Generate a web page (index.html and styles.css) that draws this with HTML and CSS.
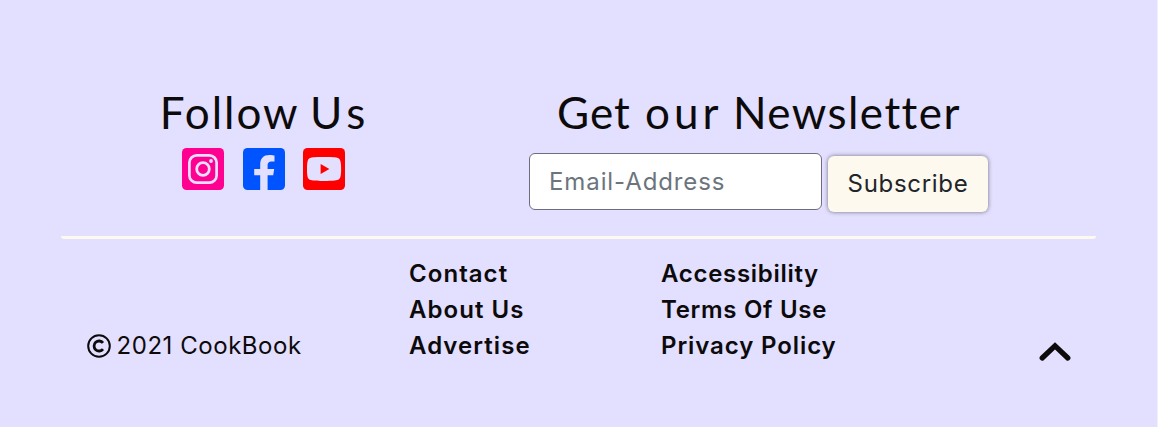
FILE: index.html
```
<!DOCTYPE html>
<html lang="en">
<head>
<meta charset="utf-8">
<title>CookBook</title>
<link rel="stylesheet" href="styles.css">
</head>
<body>
<footer class="footer">
  <div class="top">
    <section class="follow">
      <h2 class="heading heading-follow"><span class="follow-word">Follow</span> <span class="us-word">Us</span></h2>
      <div class="socials">
        <a class="social instagram" aria-label="Instagram"><svg viewBox="0 0 42 42"><rect width="42" height="42" rx="4.5" fill="currentColor"/><g fill="none" stroke="#e2dfff"><rect x="7.4" y="7.4" width="27.2" height="27.2" rx="7.2" stroke-width="2.7"/><circle cx="21" cy="21" r="6.3" stroke-width="2.8"/></g><circle cx="29" cy="13" r="1.9" fill="#e2dfff"/></svg></a>
        <a class="social facebook" aria-label="Facebook"><svg viewBox="0 0 42 42"><rect width="42" height="42" rx="4.5" fill="currentColor"/><path fill="#e2dfff" d="M17.2 42V27.3h-6V21h6v-4.6c0-6 3.5-9.3 9-9.3 2.6 0 5.3.5 5.3.5v5.8h-3c-3 0-3.9 1.8-3.9 3.7V21h6.6l-1 6.3h-5.6V42z"/></svg></a>
        <a class="social youtube" aria-label="YouTube"><svg viewBox="0 0 42 42"><rect width="42" height="42" rx="4.5" fill="currentColor"/><path fill="#e2dfff" d="M21 9c4 0 10.600 0 13.300.8 1.500.4 2.600 1.500 3 3 .8 2.800.8 5 .8 8.200s0 5.400-.8 8.200c-.4 1.500-1.500 2.500-3 2.900C31.600 33 25 33 21 33s-10.600 0-13.300-.9c-1.500-.4-2.600-1.400-3-2.900C4 26.400 4 24.200 4 21s0-5.400.7-8.200c.4-1.500 1.500-2.600 3-3C10.400 9 17 9 21 9z"/><path fill="currentColor" d="M17.600 15.900v10.200l8.800-5.100z"/></svg></a>
      </div>
    </section>
    <section class="newsletter">
      <h2 class="heading"><span class="get-word">Get</span> <span class="our-word">our</span> <span class="news-word">Newsletter</span></h2>
      <form class="form">
        <input class="email" type="email" placeholder="Email-Address" aria-label="Email-Address">
        <button class="subscribe" type="button">Subscribe</button>
      </form>
    </section>
  </div>
  <hr class="rule">
  <div class="bottom">
    <p class="copyright"><svg class="mark" viewBox="0 0 24 24" fill="none" stroke="currentColor" aria-label="Copyright"><circle cx="12" cy="12" r="10.800" stroke-width="2"/><path d="M16 15.100a5 5 0 1 1 0-6.200" stroke-width="2.800"/></svg><span>2021 CookBook</span></p>
    <ul class="links links-a"><li>Contact</li><li>About Us</li><li>Advertise</li></ul>
    <ul class="links links-b"><li>Accessibility</li><li>Terms Of Use</li><li class="privacy">Privacy Policy</li></ul>
    <a class="to-top" aria-label="Back to top"><svg viewBox="0 0 32 20"><path d="M3.200 16 16 3.800 28.800 16" fill="none" stroke="currentColor" stroke-width="5.200" stroke-linecap="round"/></svg></a>
  </div>
</footer>
</body>
</html>
```
FILE: styles.css
```
* { box-sizing: border-box; }
body { margin: 0; background: #f0eeff; font-family: Inter, "Open Sans", sans-serif; font-size: 24px; color: #0d0a0b; }
.footer { width: 1157px; height: 427px; padding: 86px 61px 0; background: #e2dfff; }
.top { display: flex; height: 150px; }
.follow { width: 404px; display: flex; flex-direction: column; align-items: center; }
.newsletter { width: 588px; display: flex; flex-direction: column; align-items: center; }
.heading { margin: 0; height: 54px; line-height: 52px; font-family: Lato, sans-serif; font-weight: 400; font-size: 44px; white-space: nowrap; }
.heading-follow { padding-left: 4px; }
.follow-word { letter-spacing: 2px; }
.us-word { letter-spacing: 5px; margin-left: -1px; }
.get-word { letter-spacing: 1px; margin-right: 3px; }
.our-word { letter-spacing: 4px; margin-right: -1px; }
.news-word { letter-spacing: 1.450px; }
.socials { display: flex; gap: 18.500px; margin-top: 8px; padding-left: 1px; }
.social, .social svg { display: block; width: 42px; height: 42px; }
.instagram { color: #ff0090; }
.facebook { color: #0054ff; }
.youtube { color: #ff0000; }
.form { display: flex; gap: 6px; margin-top: 13px; padding-right: 1px; align-items: flex-start; }
.email { width: 293px; height: 57px; padding: 0 19px; border: 1px solid #706c80; border-radius: 6px; background: #fff; font: 400 24px Inter, sans-serif; letter-spacing: .9px; }
.email::placeholder { color: #6c757d; opacity: 1; }
.subscribe { width: 160px; height: 56px; margin-top: 3px; padding: 0 0 2px; border: 0; border-radius: 6px; background: #fef9ef; color: #212529; font: 400 24px Inter, sans-serif; letter-spacing: .7px; box-shadow: 0 0 4px rgba(0,0,0,.5); }
.rule { width: 1035px; height: 3px; margin: 0; border: 0; border-radius: 0 0 3px 3px; background: #fef9ef; }
.bottom { display: grid; grid-template-columns: 348px 252px 378px 32px; padding-top: 17px; line-height: 36px; align-items: end; }
.copyright { display: flex; align-items: center; gap: 6px; margin: 0; padding-left: 25.500px; letter-spacing: .55px; }
.mark { width: 24px; height: 24px; }
.links { margin: 0; padding: 0; list-style: none; font-weight: 600; }
.links-a { letter-spacing: 1.050px; }
.links-b { letter-spacing: .7px; }
.privacy { letter-spacing: .9px; }
.to-top { padding-bottom: 2px; }
.to-top svg { display: block; width: 32px; height: 20px; }
```
